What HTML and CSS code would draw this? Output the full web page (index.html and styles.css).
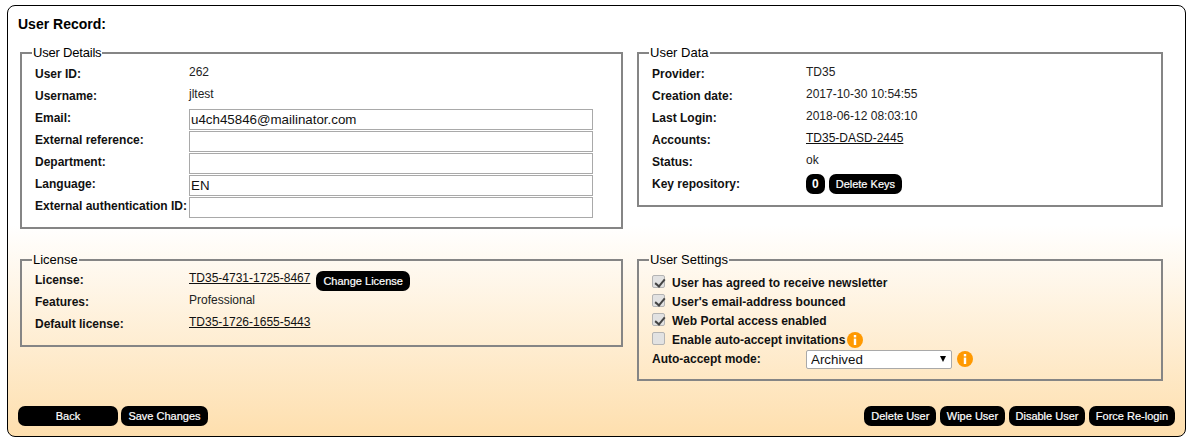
FILE: index.html
```html
<!DOCTYPE html>
<html lang="en">
<head>
<meta charset="utf-8">
<title>User Record</title>
<link rel="stylesheet" href="styles.css">
</head>
<body>
<main class="panel">
  <h1 class="title">User Record:</h1>
  <div class="columns">
    <fieldset class="box box-details">
      <legend>User Details</legend>
      <div class="row"><span class="label">User ID:</span><span class="value">262</span></div>
      <div class="row"><span class="label">Username:</span><span class="value">jltest</span></div>
      <div class="row"><label class="label">Email:</label><input class="field" type="text" value="u4ch45846@mailinator.com"></div>
      <div class="row"><label class="label">External reference:</label><input class="field" type="text"></div>
      <div class="row"><label class="label">Department:</label><input class="field" type="text"></div>
      <div class="row"><label class="label">Language:</label><input class="field" type="text" value="EN"></div>
      <div class="row"><label class="label">External authentication ID:</label><input class="field" type="text"></div>
    </fieldset>
    <fieldset class="box box-data">
      <legend>User Data</legend>
      <div class="row"><span class="label">Provider:</span><span class="value">TD35</span></div>
      <div class="row"><span class="label">Creation date:</span><span class="value">2017-10-30 10:54:55</span></div>
      <div class="row"><span class="label">Last Login:</span><span class="value">2018-06-12 08:03:10</span></div>
      <div class="row"><span class="label">Accounts:</span><a class="value link" href="#">TD35-DASD-2445</a></div>
      <div class="row"><span class="label">Status:</span><span class="value">ok</span></div>
      <div class="row"><span class="label">Key repository:</span><span class="btn btn-count">0</span><button class="btn" type="button">Delete Keys</button></div>
    </fieldset>
    <fieldset class="box box-license">
      <legend>License</legend>
      <div class="row"><span class="label">License:</span><a class="value link" href="#">TD35-4731-1725-8467</a><button class="btn btn-change" type="button">Change License</button></div>
      <div class="row"><span class="label">Features:</span><span class="value">Professional</span></div>
      <div class="row"><span class="label">Default license:</span><a class="value link" href="#">TD35-1726-1655-5443</a></div>
    </fieldset>
    <fieldset class="box box-settings">
      <legend>User Settings</legend>
      <label class="check"><input type="checkbox" checked disabled><span>User has agreed to receive newsletter</span></label>
      <label class="check"><input type="checkbox" checked disabled><span>User's email-address bounced</span></label>
      <label class="check"><input type="checkbox" checked disabled><span>Web Portal access enabled</span></label>
      <label class="check"><input type="checkbox" disabled><span>Enable auto-accept invitations</span>
        <svg class="info" viewBox="0 0 16 16" aria-hidden="true"><circle cx="8" cy="8" r="8"/><rect x="6.8" y="6.6" width="2.4" height="6.4"/><rect x="6.8" y="3" width="2.4" height="2.4"/></svg>
      </label>
      <div class="row row-mode"><span class="label">Auto-accept mode:</span>
        <span class="mode-wrap"><select class="mode"><option>Archived</option></select></span>
        <svg class="info info-mode" viewBox="0 0 16 16" aria-hidden="true"><circle cx="8" cy="8" r="8"/><rect x="6.8" y="6.6" width="2.4" height="6.4"/><rect x="6.8" y="3" width="2.4" height="2.4"/></svg>
      </div>
    </fieldset>
  </div>
  <div class="actions">
    <div class="group">
      <button class="btn btn-back" type="button">Back</button>
      <button class="btn" type="button">Save Changes</button>
    </div>
    <div class="group">
      <button class="btn" type="button">Delete User</button>
      <button class="btn" type="button">Wipe User</button>
      <button class="btn" type="button">Disable User</button>
      <button class="btn" type="button">Force Re-login</button>
    </div>
  </div>
</main>
</body>
</html>
```

FILE: styles.css
```css
* { box-sizing: border-box; }
html, body { margin: 0; height: 100%; background: #fff; }
body {
  padding: 5px 7px;
  font-family: "Liberation Sans", Arial, sans-serif;
  font-size: 12px;
  color: #111;
}
.panel {
  width: 1179px;
  height: 432px;
  padding: 10px 10px 10px 10px;
  border: 1px solid #000;
  border-radius: 8px;
  background: linear-gradient(to bottom, #fff 0%, #fff 51%, #fedfae 100%);
  display: flex;
  flex-direction: column;
}
.title {
  margin: 0;
  font-size: 14px;
  line-height: 16px;
  font-weight: bold;
  color: #000;
}
.columns {
  margin: 14px 0 0 2px;
  display: grid;
  grid-template-columns: 603px 526px;
  column-gap: 14px;
  grid-template-rows: 190px 1fr;
  row-gap: 17px;
  height: 336px;
  align-items: start;
}
.box {
  margin: 0;
  min-width: 0;
  padding: 3px 13px 0;
  border: 2px solid #858585;
}
.box legend {
  padding: 0 1px;
  margin-left: -3px;
  font-size: 13px;
  line-height: 14px;
  color: #000;
}
.box-details { height: 183px; }
.box-data { height: 161px; }
.box-license { height: 94px; padding-top: 2px; }
.box-settings { height: 128px; padding-top: 6px; }
.box-details legend { letter-spacing: -0.2px; }
.row {
  display: flex;
  align-items: center;
  height: 22px;
}
.label {
  flex: 0 0 154px;
  font-weight: bold;
  color: #111;
  white-space: nowrap;
}
.value { position: relative; top: -2px; color: #222; }
.link { color: #111; text-decoration: underline; }
.field {
  width: 404px;
  height: 21px;
  margin: 2px 0 0;
  padding: 1px;
  border: 1px solid #a9a9a9;
  border-radius: 0;
  background: #fff;
  font-family: "Liberation Sans", Arial, sans-serif;
  font-size: 13.33px;
  color: #111;
}
.btn {
  height: 20px;
  margin: 0;
  padding: 0 7px;
  border: 0;
  border-radius: 7px;
  background: #000;
  color: #fff;
  font-family: "Liberation Sans", Arial, sans-serif;
  font-size: 11px;
  font-weight: normal;
  -webkit-text-stroke: 0.2px #fff;
  line-height: 20px;
  white-space: nowrap;
}
.btn-count { padding: 0 6px; margin-right: 4px; font-size: 12px; font-weight: bold; -webkit-text-stroke: 0; }
.btn-change { margin: 1px 0 0 6px; }
.btn-back { width: 100px; }
.check {
  display: flex;
  align-items: center;
  height: 19px;
  font-weight: bold;
  color: #111;
}
.check input {
  appearance: none;
  position: relative;
  width: 13px;
  height: 13px;
  margin: 0 7px 2px 0;
  border: 1px solid #b4b4b4;
  border-radius: 2px;
  background: #e2e2e2;
}
.check input:checked::after {
  content: "";
  position: absolute;
  left: 3.5px;
  top: 0.5px;
  width: 4px;
  height: 8px;
  border: solid #444;
  border-width: 0 2px 2px 0;
  transform: rotate(40deg);
}
.info { width: 16px; height: 16px; margin-left: 2px; fill: #f90; }
.info rect { fill: #fff; }
.info-mode { margin-left: 5px; }
.row-mode { height: 20px; }
.mode-wrap { position: relative; display: block; height: 19px; }
.mode-wrap::after {
  content: "";
  position: absolute;
  right: 6px;
  top: 6px;
  border-style: solid;
  border-width: 6px 3.5px 0;
  border-color: #000 transparent transparent;
  pointer-events: none;
}
.mode {
  display: block;
  appearance: none;
  width: 146px;
  height: 19px;
  padding: 0 4px;
  border: 1px solid #a9a9a9;
  border-radius: 2px;
  background: #fff;
  font-family: "Liberation Sans", Arial, sans-serif;
  font-size: 13.33px;
  color: #111;
}
.actions {
  margin: auto 0 0 0;
  display: flex;
  justify-content: space-between;
}
.group { display: flex; gap: 3.4px; }
```
